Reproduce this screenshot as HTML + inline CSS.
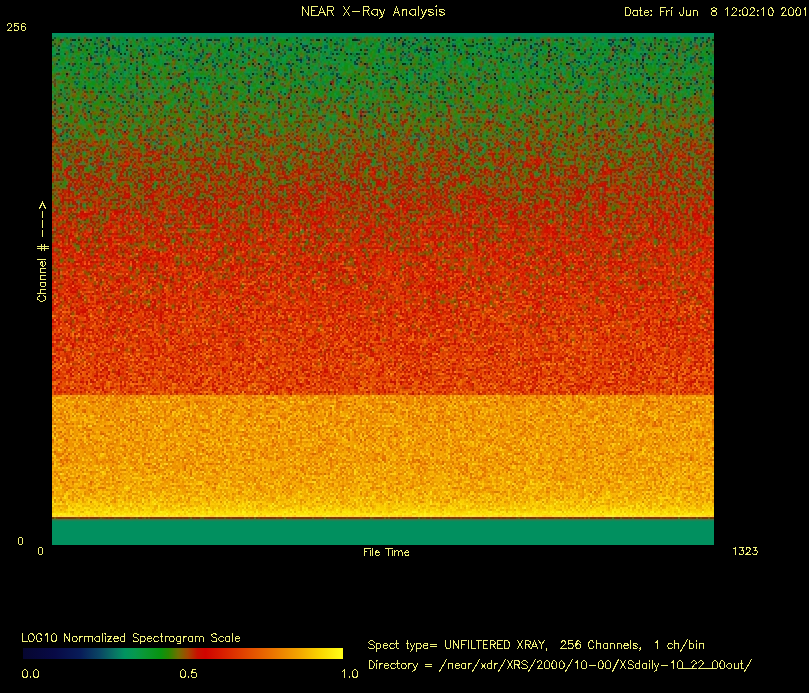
<!DOCTYPE html><html><head><meta charset="utf-8"><title>NEAR X-Ray Analysis</title><style>html,body{margin:0;padding:0;background:#000;}body{width:809px;height:693px;overflow:hidden;position:relative;font-family:"Liberation Sans",sans-serif;}#plot{position:absolute;left:52px;top:33px;width:662px;height:512px;}#bar{position:absolute;left:22.5px;top:648.3px;width:320.5px;height:10.3px;}#txt{position:absolute;left:0;top:0;}</style></head><body><div id="plot" style="background:linear-gradient(to bottom,#009460 0.00%,#009460 0.78%,#0a972e 0.78%,#099624 5.86%,#1b8d06 13.67%,#707000 19.53%,#a54600 25.39%,#c90f00 31.25%,#d20a00 37.11%,#d71a00 42.97%,#db2a00 50.78%,#de3600 58.59%,#e14200 66.41%,#e24800 70.68%,#f09600 70.70%,#f09900 78.12%,#f19e00 83.98%,#f3a800 88.87%,#f5b900 91.41%,#f9d200 93.16%,#fdf00f 94.53%,#cd0900 94.53%,#cd0900 94.92%,#009460 94.92%,#009460 100.00%)"><svg width="662" height="512" viewBox="0 0 662 512" style="display:block"><defs><linearGradient id="pg" x1="0" y1="0" x2="0" y2="1"><stop offset="0.00000" stop-color="rgb(81,0,0)"/><stop offset="0.00781" stop-color="rgb(81,0,0)"/><stop offset="0.00783" stop-color="rgb(16,115,51)"/><stop offset="0.05859" stop-color="rgb(20,115,51)"/><stop offset="0.13672" stop-color="rgb(31,127,38)"/><stop offset="0.19531" stop-color="rgb(38,153,19)"/><stop offset="0.25391" stop-color="rgb(48,143,24)"/><stop offset="0.31250" stop-color="rgb(58,134,29)"/><stop offset="0.37109" stop-color="rgb(69,128,32)"/><stop offset="0.42969" stop-color="rgb(79,121,35)"/><stop offset="0.50781" stop-color="rgb(91,96,51)"/><stop offset="0.58594" stop-color="rgb(103,73,62)"/><stop offset="0.66406" stop-color="rgb(114,57,67)"/><stop offset="0.70684" stop-color="rgb(119,48,72)"/><stop offset="0.70703" stop-color="rgb(173,19,61)"/><stop offset="0.78125" stop-color="rgb(175,19,61)"/><stop offset="0.83984" stop-color="rgb(178,19,57)"/><stop offset="0.88867" stop-color="rgb(184,19,54)"/><stop offset="0.91406" stop-color="rgb(193,26,41)"/><stop offset="0.93164" stop-color="rgb(209,32,22)"/><stop offset="0.94531" stop-color="rgb(234,29,0)"/><stop offset="0.94533" stop-color="rgb(119,0,48)"/><stop offset="0.94922" stop-color="rgb(119,0,48)"/><stop offset="0.94924" stop-color="rgb(81,0,0)"/><stop offset="1.00000" stop-color="rgb(81,0,0)"/></linearGradient><filter id="nz" x="0" y="0" width="662" height="512" filterUnits="userSpaceOnUse" primitiveUnits="userSpaceOnUse" color-interpolation-filters="sRGB"><feColorMatrix in="SourceGraphic" type="matrix" values="1 0 0 0 0 1 0 0 0 0 1 0 0 0 0 0 0 0 0 1" result="LO"/><feColorMatrix in="SourceGraphic" type="matrix" values="0 1 0 0 0 0 1 0 0 0 0 1 0 0 0 0 0 0 0 1" result="AMP"/><feColorMatrix in="SourceGraphic" type="matrix" values="0 0 1 0 0 0 0 1 0 0 0 0 1 0 0 0 0 0 0 1" result="AMP2"/><feTurbulence type="fractalNoise" baseFrequency="0.83 0.79" numOctaves="1" seed="7" result="T"/><feColorMatrix in="T" type="matrix" values="1 0 0 0 0 1 0 0 0 0 1 0 0 0 0 0 0 0 0 1" result="Ng"/><feColorMatrix in="Ng" type="matrix" values="1 0 0 0 0 1 0 0 0 0 1 0 0 0 0 0 0 0 0 1" result="N0"/><feFlood flood-color="#fff" x="0" y="0" width="1" height="1" result="dot"/><feOffset in="dot" dx="0" dy="0" x="0" y="0" width="2" height="2" result="cell"/><feTile in="cell" result="grid"/><feComposite in="N0" in2="grid" operator="in" result="s0"/><feOffset in="s0" dx="1" dy="0" result="s1"/><feOffset in="s0" dx="0" dy="1" result="s2"/><feOffset in="s0" dx="1" dy="1" result="s3"/><feMerge result="N"><feMergeNode in="s0"/><feMergeNode in="s1"/><feMergeNode in="s2"/><feMergeNode in="s3"/></feMerge><feComponentTransfer in="N" result="U1"><feFuncR type="table" tableValues="0 0.112 0.5 0.694 0.888"/><feFuncG type="table" tableValues="0 0.112 0.5 0.694 0.888"/><feFuncB type="table" tableValues="0 0.112 0.5 0.694 0.888"/></feComponentTransfer><feComponentTransfer in="N" result="U2"><feFuncR type="table" tableValues="0 0.112 0.5 0.888 1"/><feFuncG type="table" tableValues="0 0.112 0.5 0.888 1"/><feFuncB type="table" tableValues="0 0.112 0.5 0.888 1"/></feComponentTransfer><feComposite in="AMP" in2="U1" operator="arithmetic" k1="1" k2="0" k3="0" k4="0" result="P1"/><feComposite in="AMP2" in2="U2" operator="arithmetic" k1="1" k2="0" k3="0" k4="0" result="P2"/><feComposite in="P1" in2="P2" operator="arithmetic" k1="0" k2="1" k3="1" k4="0" result="P"/><feComposite in="LO" in2="P" operator="arithmetic" k1="0" k2="1" k3="1" k4="0" result="V"/><feComponentTransfer in="V" result="C"><feFuncR type="table" tableValues="0.000 0.000 0.000 0.000 0.007 0.017 0.026 0.031 0.031 0.031 0.031 0.031 0.032 0.034 0.036 0.038 0.038 0.035 0.033 0.024 0.006 0.007 0.019 0.028 0.037 0.038 0.035 0.033 0.069 0.147 0.286 0.433 0.543 0.650 0.721 0.787 0.806 0.821 0.831 0.840 0.850 0.857 0.865 0.872 0.880 0.887 0.894 0.900 0.906 0.912 0.918 0.924 0.930 0.937 0.943 0.949 0.956 0.963 0.970 0.977 0.982 0.987 0.991 0.996 1.000"/><feFuncG type="table" tableValues="0.000 0.000 0.000 0.000 0.010 0.022 0.034 0.047 0.061 0.075 0.089 0.103 0.130 0.173 0.216 0.259 0.314 0.375 0.436 0.498 0.559 0.587 0.596 0.599 0.597 0.593 0.588 0.583 0.566 0.537 0.490 0.441 0.357 0.270 0.160 0.059 0.030 0.031 0.060 0.090 0.121 0.154 0.188 0.222 0.255 0.289 0.323 0.356 0.390 0.424 0.458 0.495 0.531 0.568 0.605 0.642 0.685 0.729 0.773 0.816 0.856 0.892 0.928 0.964 1.000"/><feFuncB type="table" tableValues="0.000 0.007 0.015 0.022 0.085 0.161 0.240 0.283 0.297 0.310 0.324 0.338 0.351 0.363 0.375 0.388 0.392 0.392 0.392 0.388 0.380 0.354 0.320 0.274 0.221 0.174 0.130 0.086 0.044 0.005 0.000 0.000 0.000 0.000 0.000 0.000 0.000 0.000 0.000 0.000 0.000 0.000 0.000 0.000 0.000 0.000 0.000 0.000 0.000 0.000 0.000 0.000 0.000 0.000 0.000 0.000 0.000 0.000 0.000 0.000 0.010 0.031 0.052 0.073 0.094"/></feComponentTransfer><feColorMatrix in="C" type="matrix" values="0.299 0.587 0.114 0 0 -0.1687 -0.3313 0.5 0 0.5 0.5 -0.4187 -0.0813 0 0.5 0 0 0 0 1" result="YCC"/><feGaussianBlur in="YCC" stdDeviation="1.1 1.5" edgeMode="duplicate" result="YB"/><feGaussianBlur in="YCC" stdDeviation="0.45" edgeMode="duplicate" result="YS"/><feColorMatrix in="YS" type="matrix" values="1 0 0 0 0 0 0 0 0 0 0 0 0 0 0 0 0 0 0 1" result="Yo"/><feColorMatrix in="YB" type="matrix" values="0 0 0 0 0 0 1 0 0 0 0 0 1 0 0 0 0 0 0 1" result="Co"/><feComposite in="Yo" in2="Co" operator="arithmetic" k1="0" k2="1" k3="1" k4="0" result="MIX"/><feColorMatrix in="MIX" type="matrix" values="1 0 1.402 0 -0.701 1 -0.34414 -0.71414 0 0.52914 1 1.772 0 0 -0.886 0 0 0 0 1"/></filter></defs><rect x="0" y="0" width="662" height="512" fill="url(#pg)" filter="url(#nz)"/></svg></div><div id="bar" style="background:linear-gradient(to right,#060630 0.0%,#080a46 10.0%,#081c58 18.0%,#0a4664 24.0%,#087864 29.0%,#009460 31.8%,#06994e 35.0%,#0a9834 38.0%,#089410 43.0%,#288800 45.5%,#707000 48.5%,#a54600 51.5%,#c81000 54.5%,#d00400 57.0%,#d81c00 62.0%,#e24800 70.0%,#ea7400 78.0%,#f2a400 86.0%,#fad600 93.0%,#ffff18 100.0%)"></div><svg id="txt" width="809" height="693" viewBox="0 0 809 693"><path fill="none" stroke="#f2f27a" stroke-width="1" stroke-linecap="square" stroke-linejoin="miter" shape-rendering="crispEdges" d="M302.5 6.5L302.5 15.5M302.5 6.5L308.5 15.5M308.5 6.5L308.5 15.5M311.5 6.5L311.5 15.5M311.5 6.5L317.5 6.5M311.5 10.5L314.5 10.5M311.5 15.5L317.5 15.5M321.5 6.5L318.5 15.5M321.5 6.5L325.5 15.5M319.5 12.5L324.5 12.5M327.5 6.5L327.5 15.5M327.5 6.5L331.5 6.5L332.5 6.5L333.5 7.5L333.5 8.5L333.5 9.5L332.5 10.5L331.5 10.5L327.5 10.5M330.5 10.5L333.5 15.5M343.5 6.5L349.5 15.5M349.5 6.5L343.5 15.5M352.5 11.5L359.5 11.5M363.5 6.5L363.5 15.5M363.5 6.5L367.5 6.5L368.5 6.5L368.5 7.5L369.5 8.5L368.5 9.5L368.5 10.5L367.5 10.5L363.5 10.5M366.5 10.5L369.5 15.5M377.5 9.5L377.5 15.5M377.5 10.5L376.5 9.5L375.5 9.5L374.5 9.5L373.5 9.5L372.5 10.5L371.5 11.5L371.5 12.5L372.5 14.5L373.5 14.5L374.5 15.5L375.5 15.5L376.5 14.5L377.5 14.5M379.5 9.5L382.5 15.5M384.5 9.5L382.5 15.5L381.5 17.5L380.5 17.5L379.5 18.5M396.5 6.5L393.5 15.5M396.5 6.5L399.5 15.5M394.5 12.5L398.5 12.5M402.5 9.5L402.5 15.5M402.5 11.5L403.5 9.5L404.5 9.5L405.5 9.5L406.5 9.5L406.5 11.5L406.5 15.5M415.5 9.5L415.5 15.5M415.5 10.5L414.5 9.5L413.5 9.5L412.5 9.5L411.5 9.5L410.5 10.5L409.5 11.5L409.5 12.5L410.5 14.5L411.5 14.5L412.5 15.5L413.5 15.5L414.5 14.5L415.5 14.5M418.5 6.5L418.5 15.5M421.5 9.5L423.5 15.5M426.5 9.5L423.5 15.5L422.5 17.5L421.5 18.5L420.5 18.5M433.5 10.5L432.5 9.5L431.5 9.5L430.5 9.5L428.5 9.5L428.5 10.5L428.5 11.5L429.5 11.5L431.5 12.5L432.5 12.5L433.5 13.5L433.5 14.5L432.5 14.5L431.5 15.5L430.5 15.5L428.5 14.5M435.5 6.5L436.5 6.5L436.5 5.5L435.5 6.5M436.5 9.5L436.5 15.5M444.5 10.5L443.5 9.5L442.5 9.5L441.5 9.5L439.5 9.5L439.5 10.5L439.5 11.5L440.5 11.5L442.5 12.5L443.5 12.5L444.5 13.5L444.5 14.5L443.5 14.5L442.5 15.5L441.5 15.5L439.5 14.5M625.5 7.5L625.5 15.5M625.5 7.5L628.5 7.5L629.5 8.5L630.5 9.5L630.5 10.5L630.5 12.5L630.5 13.5L629.5 14.5L629.5 15.5L628.5 15.5L625.5 15.5M637.5 10.5L637.5 15.5M637.5 11.5L636.5 10.5L635.5 10.5L634.5 10.5L633.5 10.5L633.5 11.5L632.5 12.5L632.5 13.5L633.5 14.5L633.5 15.5L634.5 15.5L635.5 15.5L636.5 15.5L637.5 14.5M640.5 7.5L640.5 13.5L640.5 15.5L641.5 15.5L642.5 15.5M639.5 10.5L641.5 10.5M644.5 12.5L648.5 12.5L648.5 11.5L647.5 10.5L645.5 10.5L644.5 11.5L644.5 12.5L644.5 13.5L644.5 14.5L645.5 15.5L647.5 15.5L648.5 14.5M651.5 10.5L650.5 10.5L651.5 11.5L651.5 10.5M651.5 14.5L650.5 15.5L651.5 15.5L651.5 14.5M660.5 7.5L660.5 15.5M660.5 7.5L665.5 7.5M660.5 11.5L663.5 11.5M666.5 10.5L666.5 15.5M666.5 12.5L667.5 11.5L668.5 10.5L669.5 10.5M671.5 7.5L671.5 8.5L672.5 7.5L671.5 7.5M671.5 10.5L671.5 15.5M683.5 7.5L683.5 13.5L682.5 14.5L682.5 15.5L681.5 15.5L680.5 15.5L680.5 14.5L679.5 13.5L679.5 12.5M686.5 10.5L686.5 13.5L686.5 15.5L687.5 15.5L688.5 15.5L689.5 15.5L690.5 13.5M690.5 10.5L690.5 15.5M693.5 10.5L693.5 15.5M693.5 11.5L694.5 10.5L696.5 10.5L697.5 11.5L697.5 15.5M713.5 7.5L712.5 8.5L711.5 8.5L711.5 9.5L712.5 10.5L714.5 11.5L715.5 11.5L716.5 12.5L716.5 13.5L716.5 14.5L715.5 15.5L714.5 15.5L713.5 15.5L712.5 15.5L711.5 14.5L711.5 13.5L711.5 12.5L712.5 11.5L713.5 11.5L714.5 10.5L715.5 10.5L716.5 9.5L716.5 8.5L715.5 8.5L714.5 7.5L713.5 7.5M725.5 9.5L726.5 8.5L727.5 7.5L727.5 15.5M732.5 9.5L732.5 8.5L733.5 7.5L734.5 7.5L735.5 8.5L736.5 8.5L736.5 9.5L736.5 10.5L735.5 11.5L731.5 15.5L736.5 15.5M739.5 10.5L739.5 11.5L740.5 10.5L739.5 10.5M739.5 14.5L739.5 15.5L740.5 15.5L739.5 14.5M744.5 7.5L743.5 8.5L742.5 9.5L742.5 11.5L742.5 12.5L742.5 13.5L743.5 15.5L744.5 15.5L745.5 15.5L746.5 15.5L747.5 13.5L747.5 12.5L747.5 11.5L747.5 9.5L746.5 8.5L745.5 7.5L744.5 7.5M750.5 9.5L750.5 8.5L751.5 7.5L753.5 7.5L753.5 8.5L754.5 8.5L754.5 9.5L754.5 10.5L753.5 11.5L749.5 15.5L754.5 15.5M757.5 10.5L757.5 11.5L758.5 10.5L757.5 10.5M757.5 14.5L757.5 15.5L758.5 15.5L757.5 14.5M761.5 9.5L762.5 8.5L763.5 7.5L763.5 15.5M770.5 7.5L769.5 8.5L768.5 9.5L768.5 11.5L768.5 12.5L768.5 13.5L769.5 15.5L770.5 15.5L772.5 15.5L772.5 13.5L773.5 12.5L773.5 11.5L772.5 9.5L772.5 8.5L770.5 7.5M781.5 9.5L781.5 8.5L782.5 8.5L782.5 7.5L784.5 7.5L785.5 8.5L785.5 9.5L785.5 10.5L784.5 11.5L781.5 15.5L786.5 15.5M790.5 7.5L789.5 8.5L788.5 9.5L788.5 11.5L788.5 12.5L788.5 13.5L789.5 15.5L790.5 15.5L791.5 15.5L792.5 15.5L793.5 13.5L793.5 12.5L793.5 11.5L793.5 9.5L792.5 8.5L791.5 7.5L790.5 7.5M797.5 7.5L796.5 8.5L796.5 9.5L795.5 11.5L795.5 12.5L796.5 13.5L796.5 15.5L797.5 15.5L798.5 15.5L799.5 15.5L800.5 13.5L800.5 12.5L800.5 11.5L800.5 9.5L799.5 8.5L798.5 7.5L797.5 7.5M804.5 9.5L804.5 8.5L805.5 7.5L805.5 15.5M7.5 25.5L7.5 24.5L8.5 23.5L10.5 23.5L11.5 24.5L11.5 25.5L11.5 26.5L10.5 27.5L7.5 30.5L11.5 30.5M18.5 23.5L14.5 23.5L14.5 26.5L15.5 25.5L16.5 25.5L17.5 26.5L18.5 26.5L18.5 27.5L18.5 28.5L18.5 29.5L17.5 30.5L16.5 30.5L15.5 30.5L14.5 30.5L14.5 29.5M25.5 24.5L24.5 23.5L23.5 23.5L22.5 23.5L21.5 24.5L21.5 26.5L21.5 28.5L21.5 29.5L22.5 30.5L23.5 30.5L24.5 30.5L25.5 29.5L25.5 28.5L25.5 27.5L24.5 26.5L23.5 26.5L22.5 26.5L21.5 27.5L21.5 28.5M20.5 537.5L19.5 537.5L18.5 538.5L18.5 540.5L18.5 541.5L18.5 543.5L19.5 544.5L20.5 544.5L21.5 544.5L22.5 543.5L22.5 541.5L22.5 540.5L22.5 538.5L21.5 537.5L20.5 537.5M40.5 547.5L39.5 547.5L38.5 548.5L38.5 550.5L38.5 551.5L38.5 553.5L39.5 554.5L40.5 554.5L41.5 554.5L42.5 553.5L42.5 551.5L42.5 550.5L42.5 548.5L41.5 547.5L40.5 547.5M364.5 548.5L364.5 555.5M364.5 548.5L368.5 548.5M364.5 551.5L366.5 551.5M369.5 548.5L370.5 548.5L369.5 548.5M370.5 550.5L370.5 555.5M372.5 548.5L372.5 555.5M375.5 552.5L379.5 552.5L378.5 551.5L377.5 550.5L376.5 550.5L376.5 551.5L375.5 551.5L375.5 552.5L375.5 553.5L375.5 554.5L376.5 555.5L377.5 555.5L378.5 555.5L379.5 554.5M388.5 548.5L388.5 555.5M385.5 548.5L390.5 548.5M391.5 548.5L392.5 548.5L391.5 548.5M392.5 550.5L392.5 555.5M394.5 550.5L394.5 555.5M394.5 552.5L395.5 551.5L396.5 550.5L397.5 550.5L398.5 551.5L398.5 552.5L398.5 555.5M398.5 552.5L399.5 551.5L400.5 550.5L401.5 550.5L401.5 551.5L402.5 552.5L402.5 555.5M404.5 552.5L408.5 552.5L408.5 551.5L407.5 550.5L406.5 550.5L405.5 551.5L404.5 552.5L404.5 553.5L405.5 554.5L405.5 555.5L406.5 555.5L407.5 555.5L408.5 555.5L408.5 554.5M733.5 548.5L734.5 548.5L735.5 547.5L735.5 554.5M739.5 547.5L743.5 547.5L741.5 550.5L742.5 550.5L743.5 550.5L743.5 551.5L743.5 552.5L743.5 553.5L742.5 554.5L741.5 554.5L740.5 554.5L739.5 554.5L739.5 553.5M746.5 549.5L746.5 548.5L746.5 547.5L747.5 547.5L748.5 547.5L749.5 547.5L749.5 548.5L750.5 548.5L750.5 549.5L749.5 550.5L749.5 551.5L745.5 554.5L750.5 554.5M753.5 547.5L756.5 547.5L754.5 550.5L755.5 550.5L756.5 550.5L757.5 551.5L757.5 552.5L756.5 553.5L756.5 554.5L755.5 554.5L754.5 554.5L753.5 554.5L752.5 553.5M39.5 295.5L39.5 296.5L38.5 296.5L37.5 297.5L37.5 299.5L38.5 299.5L39.5 300.5L40.5 301.5L42.5 301.5L43.5 300.5L44.5 300.5L45.5 299.5L45.5 297.5L45.5 296.5L44.5 296.5L43.5 295.5M37.5 293.5L45.5 293.5M41.5 293.5L40.5 292.5L40.5 291.5L40.5 290.5L40.5 289.5L41.5 289.5L45.5 289.5M40.5 282.5L45.5 282.5M41.5 282.5L40.5 283.5L40.5 284.5L40.5 285.5L41.5 286.5L42.5 286.5L43.5 286.5L44.5 286.5L45.5 285.5L45.5 284.5L45.5 283.5L44.5 282.5M40.5 279.5L45.5 279.5M41.5 279.5L40.5 278.5L40.5 277.5L40.5 276.5L40.5 275.5L41.5 275.5L45.5 275.5M40.5 272.5L45.5 272.5M41.5 272.5L40.5 271.5L40.5 270.5L40.5 269.5L40.5 268.5L41.5 268.5L45.5 268.5M42.5 266.5L42.5 261.5L41.5 261.5L41.5 262.5L40.5 262.5L40.5 263.5L40.5 264.5L41.5 265.5L42.5 266.5L43.5 266.5L44.5 265.5L45.5 264.5L45.5 263.5L45.5 262.5L44.5 261.5M37.5 259.5L45.5 259.5M37.5 248.5L48.5 248.5M37.5 246.5L48.5 246.5M41.5 250.5L41.5 244.5M44.5 250.5L44.5 244.5M42.5 236.5L42.5 230.5M42.5 227.5L42.5 220.5M42.5 217.5L42.5 211.5M39.5 208.5L42.5 202.5L45.5 208.5M22.5 633.5L22.5 641.5M22.5 641.5L27.5 641.5M30.5 633.5L29.5 634.5L28.5 635.5L28.5 636.5L28.5 638.5L28.5 639.5L29.5 640.5L29.5 641.5L30.5 641.5L32.5 641.5L33.5 640.5L33.5 639.5L34.5 638.5L34.5 636.5L33.5 635.5L33.5 634.5L32.5 634.5L32.5 633.5L30.5 633.5M41.5 635.5L41.5 634.5L40.5 634.5L40.5 633.5L38.5 633.5L37.5 634.5L36.5 635.5L36.5 636.5L36.5 638.5L36.5 639.5L37.5 640.5L37.5 641.5L38.5 641.5L40.5 641.5L41.5 640.5L41.5 639.5L41.5 638.5M40.5 638.5L41.5 638.5M45.5 635.5L45.5 634.5L47.5 633.5L47.5 641.5M53.5 633.5L52.5 634.5L51.5 635.5L51.5 637.5L51.5 638.5L51.5 639.5L52.5 641.5L53.5 641.5L54.5 641.5L55.5 641.5L56.5 639.5L56.5 638.5L56.5 637.5L56.5 635.5L55.5 634.5L54.5 633.5L53.5 633.5M64.5 633.5L64.5 641.5M64.5 633.5L69.5 641.5M69.5 633.5L69.5 641.5M74.5 636.5L73.5 636.5L72.5 637.5L72.5 638.5L72.5 639.5L72.5 640.5L73.5 641.5L74.5 641.5L75.5 641.5L76.5 641.5L76.5 640.5L77.5 639.5L77.5 638.5L76.5 637.5L76.5 636.5L75.5 636.5L74.5 636.5M79.5 636.5L79.5 641.5M79.5 638.5L80.5 637.5L80.5 636.5L81.5 636.5L82.5 636.5M84.5 636.5L84.5 641.5M84.5 637.5L85.5 636.5L86.5 636.5L87.5 636.5L88.5 636.5L88.5 637.5L88.5 641.5M88.5 637.5L89.5 636.5L90.5 636.5L91.5 636.5L92.5 636.5L92.5 637.5L92.5 641.5M99.5 636.5L99.5 641.5M99.5 637.5L98.5 636.5L97.5 636.5L96.5 636.5L95.5 637.5L94.5 638.5L94.5 639.5L95.5 640.5L96.5 641.5L97.5 641.5L98.5 641.5L99.5 640.5M102.5 633.5L102.5 641.5M104.5 633.5L105.5 634.5L105.5 633.5L104.5 633.5M105.5 636.5L105.5 641.5M111.5 636.5L107.5 641.5M107.5 636.5L111.5 636.5M107.5 641.5L111.5 641.5M113.5 638.5L118.5 638.5L118.5 637.5L117.5 637.5L117.5 636.5L116.5 636.5L115.5 636.5L114.5 636.5L114.5 637.5L113.5 638.5L113.5 639.5L114.5 640.5L114.5 641.5L115.5 641.5L116.5 641.5L117.5 641.5L118.5 640.5M124.5 633.5L124.5 641.5M124.5 637.5L124.5 636.5L123.5 636.5L122.5 636.5L121.5 636.5L120.5 637.5L120.5 638.5L120.5 639.5L120.5 640.5L121.5 641.5L122.5 641.5L123.5 641.5L124.5 641.5L124.5 640.5M138.5 634.5L137.5 634.5L136.5 633.5L134.5 633.5L133.5 634.5L133.5 635.5L133.5 636.5L134.5 637.5L136.5 637.5L137.5 638.5L138.5 639.5L138.5 640.5L137.5 641.5L136.5 641.5L134.5 641.5L133.5 641.5L133.5 640.5M140.5 636.5L140.5 643.5M140.5 637.5L141.5 636.5L142.5 636.5L143.5 636.5L144.5 636.5L144.5 637.5L145.5 638.5L145.5 639.5L144.5 640.5L144.5 641.5L143.5 641.5L142.5 641.5L141.5 641.5L140.5 640.5M147.5 638.5L151.5 638.5L151.5 637.5L150.5 636.5L149.5 636.5L148.5 636.5L147.5 637.5L147.5 638.5L147.5 639.5L147.5 640.5L148.5 641.5L149.5 641.5L150.5 641.5L151.5 640.5M158.5 637.5L157.5 636.5L156.5 636.5L155.5 636.5L154.5 636.5L154.5 637.5L153.5 638.5L153.5 639.5L154.5 640.5L154.5 641.5L155.5 641.5L156.5 641.5L157.5 641.5L158.5 640.5M161.5 633.5L161.5 639.5L161.5 641.5L162.5 641.5M160.5 636.5L162.5 636.5M165.5 636.5L165.5 641.5M165.5 638.5L165.5 637.5L166.5 636.5L168.5 636.5M171.5 636.5L170.5 636.5L169.5 637.5L169.5 638.5L169.5 639.5L169.5 640.5L170.5 641.5L171.5 641.5L172.5 641.5L173.5 641.5L173.5 640.5L174.5 639.5L174.5 638.5L173.5 637.5L173.5 636.5L172.5 636.5L171.5 636.5M180.5 636.5L180.5 642.5L180.5 643.5L179.5 643.5L178.5 643.5L177.5 643.5M180.5 637.5L180.5 636.5L179.5 636.5L178.5 636.5L177.5 636.5L176.5 637.5L176.5 638.5L176.5 639.5L176.5 640.5L177.5 641.5L178.5 641.5L179.5 641.5L180.5 641.5L180.5 640.5M183.5 636.5L183.5 641.5M183.5 638.5L184.5 637.5L184.5 636.5L185.5 636.5L186.5 636.5M192.5 636.5L192.5 641.5M192.5 637.5L191.5 636.5L190.5 636.5L189.5 636.5L188.5 637.5L188.5 638.5L188.5 639.5L188.5 640.5L189.5 641.5L190.5 641.5L191.5 641.5L192.5 640.5M195.5 636.5L195.5 641.5M195.5 637.5L196.5 636.5L197.5 636.5L198.5 636.5L199.5 637.5L199.5 641.5M199.5 637.5L200.5 636.5L201.5 636.5L202.5 636.5L203.5 637.5L203.5 641.5M216.5 634.5L214.5 633.5L213.5 633.5L212.5 634.5L211.5 634.5L211.5 635.5L212.5 636.5L213.5 637.5L215.5 637.5L216.5 638.5L216.5 639.5L216.5 640.5L216.5 641.5L214.5 641.5L213.5 641.5L212.5 641.5L211.5 640.5M223.5 637.5L222.5 636.5L221.5 636.5L220.5 636.5L219.5 637.5L218.5 638.5L218.5 639.5L219.5 640.5L220.5 641.5L221.5 641.5L222.5 641.5L223.5 640.5M229.5 636.5L229.5 641.5M229.5 637.5L229.5 636.5L228.5 636.5L227.5 636.5L226.5 636.5L225.5 637.5L225.5 638.5L225.5 639.5L225.5 640.5L226.5 641.5L227.5 641.5L228.5 641.5L229.5 641.5L229.5 640.5M232.5 633.5L232.5 641.5M235.5 638.5L239.5 638.5L239.5 637.5L238.5 636.5L237.5 636.5L236.5 636.5L235.5 637.5L235.5 638.5L235.5 639.5L235.5 640.5L236.5 641.5L237.5 641.5L238.5 641.5L239.5 640.5M24.5 669.5L23.5 670.5L22.5 671.5L22.5 673.5L22.5 674.5L22.5 675.5L23.5 677.5L24.5 677.5L25.5 677.5L26.5 677.5L27.5 675.5L27.5 674.5L27.5 673.5L27.5 671.5L26.5 670.5L25.5 669.5L24.5 669.5M30.5 676.5L30.5 677.5L30.5 676.5M35.5 669.5L34.5 670.5L33.5 671.5L33.5 673.5L33.5 674.5L33.5 675.5L34.5 677.5L35.5 677.5L36.5 677.5L37.5 677.5L38.5 675.5L38.5 674.5L38.5 673.5L38.5 671.5L37.5 670.5L36.5 669.5L35.5 669.5M182.5 669.5L181.5 670.5L180.5 671.5L180.5 673.5L180.5 674.5L180.5 675.5L181.5 677.5L182.5 677.5L183.5 677.5L184.5 677.5L185.5 675.5L185.5 674.5L185.5 673.5L185.5 671.5L184.5 670.5L183.5 669.5L182.5 669.5M188.5 676.5L188.5 677.5L188.5 676.5M195.5 669.5L192.5 669.5L191.5 673.5L192.5 672.5L193.5 672.5L194.5 672.5L195.5 672.5L196.5 673.5L196.5 674.5L196.5 675.5L196.5 676.5L195.5 677.5L194.5 677.5L193.5 677.5L192.5 677.5L191.5 676.5L191.5 675.5M342.5 671.5L343.5 670.5L344.5 669.5L344.5 677.5M349.5 676.5L349.5 677.5L349.5 676.5M354.5 669.5L353.5 670.5L352.5 671.5L352.5 673.5L352.5 674.5L352.5 675.5L353.5 677.5L354.5 677.5L355.5 677.5L356.5 677.5L357.5 675.5L357.5 674.5L357.5 673.5L357.5 671.5L356.5 670.5L355.5 669.5L354.5 669.5M374.5 642.5L373.5 641.5L372.5 640.5L370.5 640.5L369.5 641.5L368.5 642.5L369.5 643.5L370.5 644.5L372.5 644.5L373.5 645.5L374.5 646.5L374.5 647.5L373.5 648.5L372.5 648.5L370.5 648.5L369.5 648.5L368.5 647.5M376.5 643.5L376.5 651.5M376.5 644.5L377.5 643.5L378.5 643.5L379.5 643.5L380.5 644.5L380.5 645.5L380.5 646.5L380.5 647.5L379.5 648.5L378.5 648.5L377.5 648.5L376.5 647.5M383.5 645.5L387.5 645.5L387.5 644.5L386.5 643.5L384.5 643.5L383.5 644.5L383.5 645.5L383.5 646.5L383.5 647.5L384.5 648.5L386.5 648.5L387.5 647.5M394.5 644.5L393.5 643.5L392.5 643.5L391.5 643.5L390.5 643.5L390.5 644.5L389.5 645.5L389.5 646.5L390.5 647.5L390.5 648.5L391.5 648.5L392.5 648.5L393.5 648.5L394.5 647.5M396.5 640.5L396.5 647.5L397.5 648.5L398.5 648.5M395.5 643.5L398.5 643.5M407.5 640.5L407.5 647.5L407.5 648.5L408.5 648.5M406.5 643.5L408.5 643.5M410.5 643.5L412.5 648.5M414.5 643.5L412.5 648.5L411.5 650.5L410.5 651.5M416.5 643.5L416.5 651.5M416.5 644.5L417.5 643.5L418.5 643.5L419.5 643.5L420.5 643.5L420.5 644.5L421.5 645.5L421.5 646.5L420.5 647.5L420.5 648.5L419.5 648.5L418.5 648.5L417.5 648.5L416.5 647.5M423.5 645.5L427.5 645.5L427.5 644.5L427.5 643.5L426.5 643.5L425.5 643.5L424.5 643.5L423.5 644.5L423.5 645.5L423.5 646.5L423.5 647.5L424.5 648.5L425.5 648.5L426.5 648.5L427.5 648.5L427.5 647.5M430.5 644.5L436.5 644.5M430.5 646.5L436.5 646.5M445.5 640.5L445.5 646.5L446.5 647.5L446.5 648.5L447.5 648.5L448.5 648.5L449.5 648.5L450.5 647.5L450.5 646.5L450.5 640.5M453.5 640.5L453.5 648.5M453.5 640.5L458.5 648.5M458.5 640.5L458.5 648.5M461.5 640.5L461.5 648.5M461.5 640.5L466.5 640.5M461.5 644.5L464.5 644.5M468.5 640.5L468.5 648.5M471.5 640.5L471.5 648.5M471.5 648.5L475.5 648.5M478.5 640.5L478.5 648.5M476.5 640.5L481.5 640.5M483.5 640.5L483.5 648.5M483.5 640.5L487.5 640.5M483.5 644.5L486.5 644.5M483.5 648.5L487.5 648.5M490.5 640.5L490.5 648.5M490.5 640.5L493.5 640.5L494.5 641.5L495.5 642.5L495.5 643.5L494.5 643.5L494.5 644.5L493.5 644.5L490.5 644.5M492.5 644.5L495.5 648.5M497.5 640.5L497.5 648.5M497.5 640.5L502.5 640.5M497.5 644.5L500.5 644.5M497.5 648.5L502.5 648.5M504.5 640.5L504.5 648.5M504.5 640.5L507.5 640.5L508.5 641.5L508.5 642.5L509.5 642.5L509.5 643.5L509.5 645.5L509.5 646.5L508.5 647.5L508.5 648.5L507.5 648.5L504.5 648.5M517.5 640.5L522.5 648.5M522.5 640.5L517.5 648.5M525.5 640.5L525.5 648.5M525.5 640.5L528.5 640.5L529.5 641.5L530.5 641.5L530.5 642.5L530.5 643.5L529.5 644.5L528.5 644.5L525.5 644.5M527.5 644.5L530.5 648.5M534.5 640.5L531.5 648.5M534.5 640.5L537.5 648.5M532.5 646.5L536.5 646.5M538.5 640.5L541.5 644.5L541.5 648.5M544.5 640.5L541.5 644.5M546.5 648.5L546.5 647.5L546.5 648.5L546.5 649.5L546.5 650.5M561.5 642.5L561.5 641.5L562.5 641.5L562.5 640.5L564.5 640.5L564.5 641.5L565.5 641.5L565.5 642.5L565.5 643.5L564.5 644.5L560.5 648.5L566.5 648.5M572.5 640.5L568.5 640.5L568.5 644.5L568.5 643.5L570.5 643.5L571.5 643.5L572.5 643.5L572.5 644.5L573.5 645.5L573.5 646.5L572.5 647.5L572.5 648.5L571.5 648.5L570.5 648.5L568.5 648.5L568.5 647.5M580.5 642.5L579.5 641.5L578.5 640.5L576.5 641.5L576.5 642.5L575.5 644.5L575.5 646.5L576.5 647.5L576.5 648.5L578.5 648.5L579.5 648.5L580.5 647.5L580.5 646.5L580.5 644.5L579.5 644.5L578.5 643.5L576.5 644.5L575.5 646.5M593.5 642.5L592.5 641.5L592.5 640.5L590.5 640.5L589.5 641.5L589.5 642.5L588.5 642.5L588.5 643.5L588.5 645.5L588.5 646.5L589.5 647.5L589.5 648.5L590.5 648.5L592.5 648.5L593.5 647.5L593.5 646.5M596.5 640.5L596.5 648.5M596.5 644.5L597.5 643.5L598.5 643.5L599.5 643.5L600.5 643.5L600.5 644.5L600.5 648.5M607.5 643.5L607.5 648.5M607.5 644.5L606.5 643.5L605.5 643.5L604.5 643.5L603.5 644.5L603.5 645.5L603.5 646.5L603.5 647.5L604.5 648.5L605.5 648.5L606.5 648.5L607.5 647.5M610.5 643.5L610.5 648.5M610.5 644.5L611.5 643.5L612.5 643.5L613.5 643.5L614.5 644.5L614.5 648.5M617.5 643.5L617.5 648.5M617.5 644.5L618.5 643.5L619.5 643.5L620.5 643.5L621.5 644.5L621.5 648.5M623.5 645.5L628.5 645.5L628.5 644.5L627.5 644.5L627.5 643.5L626.5 643.5L625.5 643.5L624.5 643.5L624.5 644.5L623.5 645.5L623.5 646.5L624.5 647.5L624.5 648.5L625.5 648.5L626.5 648.5L627.5 648.5L628.5 647.5M630.5 640.5L630.5 648.5M637.5 644.5L636.5 643.5L635.5 643.5L634.5 643.5L633.5 643.5L633.5 644.5L633.5 645.5L634.5 645.5L636.5 646.5L637.5 647.5L636.5 648.5L635.5 648.5L634.5 648.5L633.5 648.5L633.5 647.5M640.5 648.5L639.5 648.5L640.5 647.5L640.5 648.5L640.5 649.5L639.5 650.5M655.5 642.5L656.5 642.5L657.5 640.5L657.5 648.5M672.5 644.5L671.5 643.5L670.5 643.5L669.5 643.5L668.5 643.5L668.5 644.5L667.5 645.5L667.5 646.5L668.5 647.5L668.5 648.5L669.5 648.5L670.5 648.5L671.5 648.5L672.5 647.5M674.5 640.5L674.5 648.5M674.5 644.5L675.5 643.5L676.5 643.5L677.5 643.5L678.5 643.5L678.5 644.5L678.5 648.5M687.5 639.5L680.5 651.5M689.5 640.5L689.5 648.5M689.5 644.5L690.5 643.5L691.5 643.5L692.5 643.5L693.5 644.5L693.5 645.5L693.5 646.5L693.5 647.5L692.5 648.5L691.5 648.5L690.5 648.5L689.5 647.5M696.5 640.5L696.5 641.5L696.5 640.5M696.5 643.5L696.5 648.5M699.5 643.5L699.5 648.5M699.5 644.5L700.5 643.5L701.5 643.5L702.5 643.5L703.5 643.5L703.5 644.5L703.5 648.5M369.5 660.5L369.5 668.5M369.5 660.5L371.5 660.5L372.5 661.5L373.5 662.5L374.5 663.5L374.5 665.5L373.5 666.5L373.5 667.5L372.5 668.5L371.5 668.5L369.5 668.5M376.5 660.5L376.5 661.5L377.5 660.5L376.5 660.5M376.5 663.5L376.5 668.5M379.5 663.5L379.5 668.5M379.5 665.5L380.5 664.5L380.5 663.5L381.5 663.5L382.5 663.5M384.5 665.5L388.5 665.5L388.5 664.5L387.5 663.5L385.5 663.5L384.5 664.5L384.5 665.5L384.5 666.5L384.5 667.5L385.5 668.5L387.5 668.5L388.5 667.5M395.5 664.5L394.5 663.5L393.5 663.5L392.5 663.5L391.5 663.5L391.5 664.5L390.5 665.5L390.5 666.5L391.5 667.5L391.5 668.5L392.5 668.5L393.5 668.5L394.5 668.5L395.5 667.5M397.5 660.5L397.5 667.5L398.5 668.5L399.5 668.5M396.5 663.5L399.5 663.5M403.5 663.5L402.5 663.5L401.5 664.5L401.5 665.5L401.5 666.5L401.5 667.5L402.5 668.5L403.5 668.5L404.5 668.5L405.5 668.5L405.5 667.5L406.5 666.5L406.5 665.5L405.5 664.5L405.5 663.5L404.5 663.5L403.5 663.5M408.5 663.5L408.5 668.5M408.5 665.5L409.5 664.5L409.5 663.5L410.5 663.5L411.5 663.5M412.5 663.5L415.5 668.5M417.5 663.5L415.5 668.5L414.5 670.5L413.5 670.5L412.5 671.5M425.5 664.5L431.5 664.5M425.5 666.5L431.5 666.5M446.5 659.5L439.5 671.5M448.5 663.5L448.5 668.5M448.5 664.5L449.5 663.5L450.5 663.5L451.5 663.5L452.5 663.5L452.5 664.5L452.5 668.5M455.5 665.5L459.5 665.5L459.5 664.5L458.5 663.5L457.5 663.5L456.5 663.5L455.5 664.5L455.5 665.5L455.5 666.5L455.5 667.5L456.5 668.5L457.5 668.5L458.5 668.5L459.5 667.5M465.5 663.5L465.5 668.5M465.5 664.5L465.5 663.5L464.5 663.5L463.5 663.5L462.5 663.5L461.5 664.5L461.5 665.5L461.5 666.5L461.5 667.5L462.5 668.5L463.5 668.5L464.5 668.5L465.5 668.5L465.5 667.5M468.5 663.5L468.5 668.5M468.5 665.5L469.5 664.5L469.5 663.5L470.5 663.5L471.5 663.5M479.5 659.5L472.5 671.5M481.5 663.5L485.5 668.5M485.5 663.5L481.5 668.5M491.5 660.5L491.5 668.5M491.5 664.5L491.5 663.5L490.5 663.5L489.5 663.5L488.5 663.5L487.5 664.5L487.5 665.5L487.5 666.5L487.5 667.5L488.5 668.5L489.5 668.5L490.5 668.5L491.5 668.5L491.5 667.5M494.5 663.5L494.5 668.5M494.5 665.5L495.5 664.5L495.5 663.5L496.5 663.5L497.5 663.5M505.5 659.5L498.5 671.5M507.5 660.5L512.5 668.5M512.5 660.5L507.5 668.5M514.5 660.5L514.5 668.5M514.5 660.5L517.5 660.5L519.5 661.5L519.5 662.5L519.5 663.5L519.5 664.5L517.5 664.5L514.5 664.5M517.5 664.5L519.5 668.5M527.5 662.5L526.5 661.5L525.5 660.5L523.5 660.5L522.5 661.5L521.5 662.5L522.5 663.5L523.5 664.5L525.5 664.5L526.5 665.5L527.5 666.5L527.5 667.5L526.5 668.5L525.5 668.5L523.5 668.5L522.5 668.5L521.5 667.5M535.5 659.5L528.5 671.5M537.5 662.5L537.5 661.5L538.5 661.5L539.5 660.5L540.5 660.5L541.5 661.5L541.5 662.5L541.5 663.5L540.5 664.5L537.5 668.5L542.5 668.5M546.5 660.5L545.5 661.5L544.5 662.5L544.5 664.5L544.5 665.5L544.5 667.5L545.5 668.5L546.5 668.5L547.5 668.5L548.5 668.5L549.5 667.5L549.5 665.5L549.5 664.5L549.5 662.5L548.5 661.5L547.5 660.5L546.5 660.5M553.5 660.5L552.5 661.5L552.5 662.5L551.5 664.5L551.5 665.5L552.5 667.5L552.5 668.5L553.5 668.5L554.5 668.5L555.5 668.5L556.5 667.5L556.5 665.5L556.5 664.5L556.5 662.5L555.5 661.5L554.5 660.5L553.5 660.5M561.5 660.5L560.5 661.5L559.5 662.5L559.5 664.5L559.5 665.5L559.5 667.5L560.5 668.5L561.5 668.5L562.5 668.5L563.5 667.5L564.5 665.5L564.5 664.5L563.5 662.5L562.5 661.5L561.5 660.5M572.5 659.5L565.5 671.5M575.5 662.5L576.5 662.5L577.5 660.5L577.5 668.5M583.5 660.5L582.5 661.5L581.5 662.5L581.5 664.5L581.5 665.5L581.5 667.5L582.5 668.5L583.5 668.5L584.5 668.5L585.5 668.5L586.5 667.5L586.5 665.5L586.5 664.5L586.5 662.5L585.5 661.5L584.5 660.5L583.5 660.5M589.5 665.5L595.5 665.5M600.5 660.5L599.5 661.5L598.5 662.5L598.5 664.5L598.5 665.5L598.5 667.5L599.5 668.5L600.5 668.5L601.5 668.5L602.5 668.5L602.5 667.5L603.5 665.5L603.5 664.5L602.5 662.5L602.5 661.5L601.5 660.5L600.5 660.5M607.5 660.5L606.5 661.5L605.5 662.5L605.5 664.5L605.5 665.5L605.5 667.5L606.5 668.5L607.5 668.5L608.5 668.5L609.5 668.5L610.5 667.5L610.5 665.5L610.5 664.5L610.5 662.5L609.5 661.5L608.5 660.5L607.5 660.5M618.5 659.5L612.5 671.5M620.5 660.5L625.5 668.5M625.5 660.5L620.5 668.5M633.5 662.5L632.5 661.5L631.5 660.5L629.5 660.5L628.5 661.5L628.5 662.5L628.5 663.5L629.5 664.5L631.5 664.5L632.5 665.5L633.5 666.5L633.5 667.5L632.5 668.5L631.5 668.5L629.5 668.5L628.5 668.5L628.5 667.5M639.5 660.5L639.5 668.5M639.5 664.5L638.5 663.5L637.5 663.5L636.5 663.5L635.5 664.5L635.5 665.5L635.5 666.5L635.5 667.5L636.5 668.5L637.5 668.5L638.5 668.5L639.5 667.5M646.5 663.5L646.5 668.5M646.5 664.5L645.5 663.5L644.5 663.5L643.5 663.5L642.5 664.5L642.5 665.5L642.5 666.5L642.5 667.5L643.5 668.5L644.5 668.5L645.5 668.5L646.5 667.5M649.5 660.5L649.5 661.5L649.5 660.5M649.5 663.5L649.5 668.5M652.5 660.5L652.5 668.5M654.5 663.5L656.5 668.5M658.5 663.5L656.5 668.5L656.5 670.5L655.5 670.5L654.5 671.5M661.5 665.5L667.5 665.5M671.5 662.5L672.5 662.5L673.5 660.5L673.5 668.5M679.5 660.5L678.5 661.5L677.5 662.5L677.5 664.5L677.5 665.5L677.5 667.5L678.5 668.5L679.5 668.5L680.5 668.5L681.5 668.5L682.5 667.5L682.5 665.5L682.5 664.5L682.5 662.5L681.5 661.5L680.5 660.5L679.5 660.5M682.5 668.5L691.5 668.5M691.5 662.5L692.5 661.5L693.5 660.5L694.5 660.5L695.5 661.5L696.5 662.5L696.5 663.5L695.5 663.5L694.5 664.5L691.5 668.5L696.5 668.5M698.5 662.5L699.5 661.5L700.5 660.5L701.5 660.5L702.5 661.5L703.5 662.5L703.5 663.5L702.5 663.5L702.5 664.5L698.5 668.5L703.5 668.5M703.5 668.5L712.5 668.5M714.5 660.5L713.5 661.5L712.5 662.5L712.5 664.5L712.5 665.5L712.5 667.5L713.5 668.5L714.5 668.5L715.5 668.5L716.5 668.5L717.5 667.5L717.5 665.5L717.5 664.5L717.5 662.5L716.5 661.5L715.5 660.5L714.5 660.5M721.5 660.5L720.5 661.5L720.5 662.5L719.5 664.5L719.5 665.5L720.5 667.5L720.5 668.5L721.5 668.5L722.5 668.5L723.5 668.5L724.5 667.5L724.5 665.5L724.5 664.5L724.5 662.5L723.5 661.5L722.5 660.5L721.5 660.5M728.5 663.5L727.5 664.5L726.5 665.5L726.5 666.5L727.5 667.5L728.5 668.5L729.5 668.5L730.5 668.5L731.5 667.5L731.5 666.5L731.5 665.5L731.5 664.5L730.5 663.5L729.5 663.5L728.5 663.5M734.5 663.5L734.5 667.5L734.5 668.5L735.5 668.5L736.5 668.5L737.5 668.5L738.5 667.5M738.5 663.5L738.5 668.5M741.5 660.5L741.5 667.5L741.5 668.5L742.5 668.5L743.5 668.5M740.5 663.5L742.5 663.5M751.5 659.5L744.5 671.5"/></svg></body></html>
